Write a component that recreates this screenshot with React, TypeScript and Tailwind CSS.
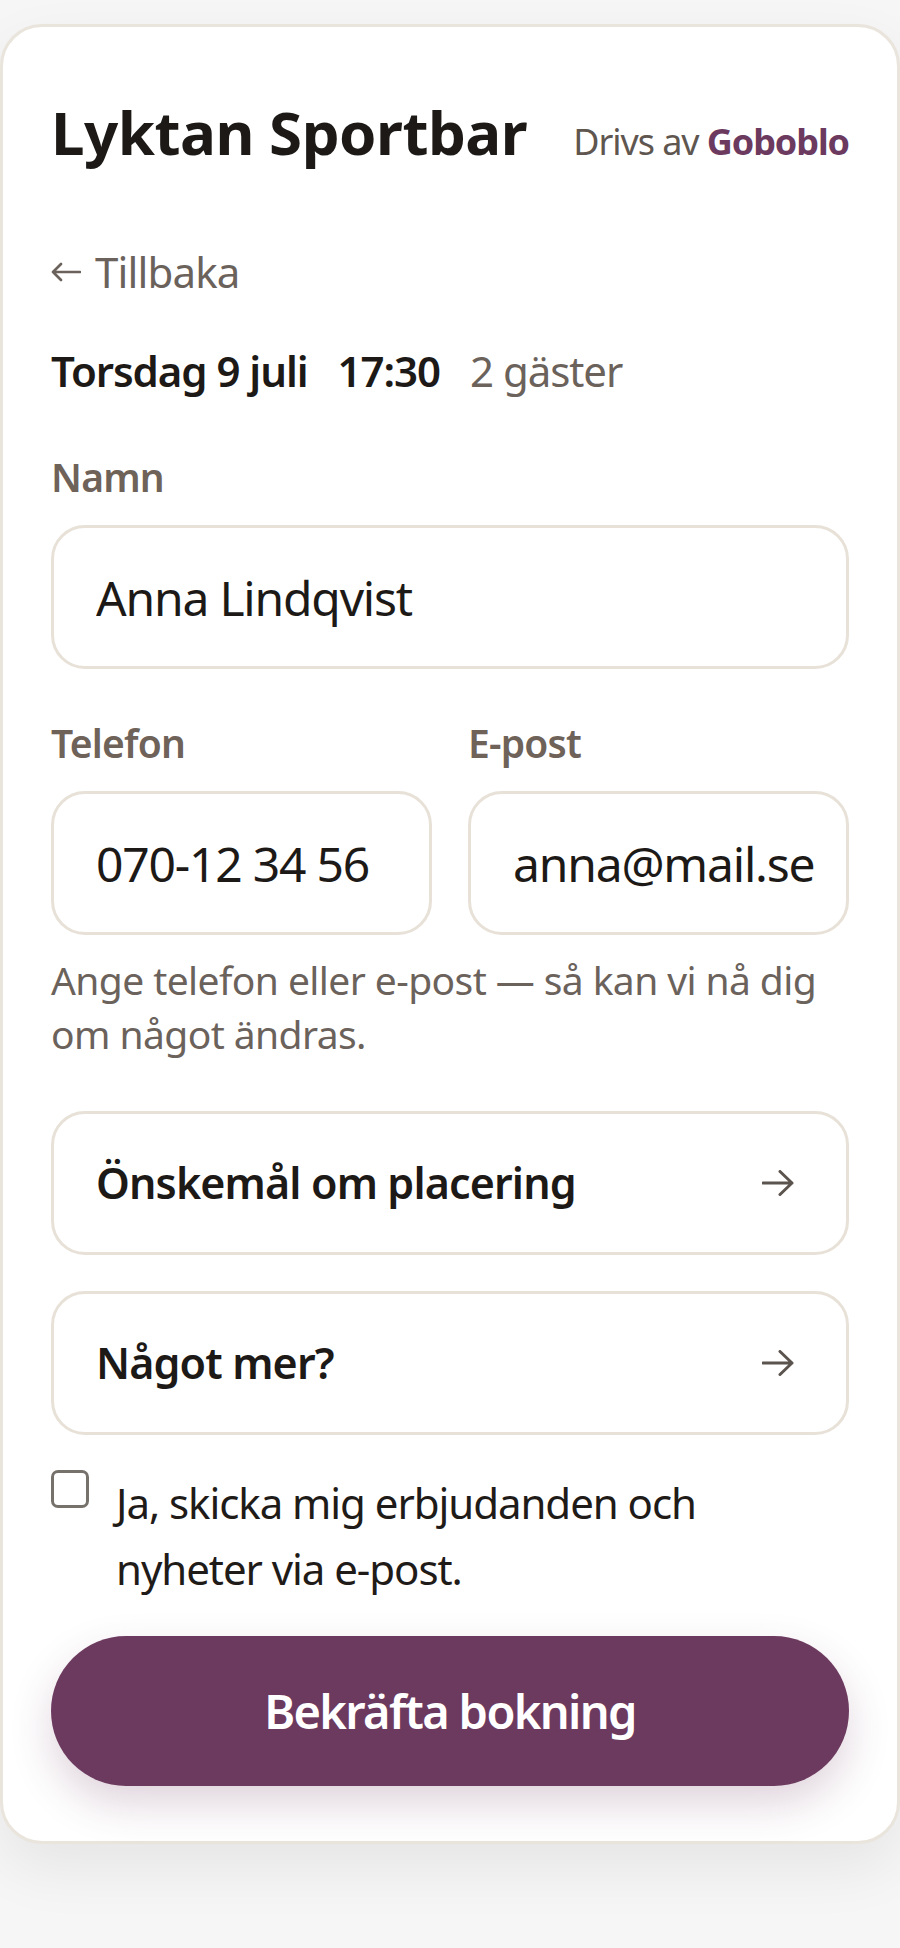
import { useState } from 'react'

function ArrowRight() {
  return (
    <svg width="32" height="26" viewBox="0 0 32 26" fill="none" aria-hidden>
      <path
        d="M1 13H30M18 1.5L30 13L18 24.5"
        stroke="#5b534d"
        strokeWidth="3"
        strokeLinecap="round"
        strokeLinejoin="round"
      />
    </svg>
  )
}

function ArrowLeft() {
  return (
    <svg width="30" height="20" viewBox="0 0 30 20" fill="none" aria-hidden>
      <path
        d="M29 10H2M10 2L2 10L10 18"
        stroke="#6b625b"
        strokeWidth="2.6"
        strokeLinecap="round"
        strokeLinejoin="round"
      />
    </svg>
  )
}

function Field({ value }: { value: string }) {
  return (
    <input
      readOnly
      defaultValue={value}
      className="block h-[144px] w-full min-w-0 rounded-[34px] border-[3px] border-[#e7e1d8] bg-white pl-[42px] pr-[24px] text-[48px] tracking-[-0.025em] text-[#1c1917] outline-none"
    />
  )
}

function OptionRow({ label }: { label: string }) {
  return (
    <button className="flex h-[144px] w-full items-center justify-between rounded-[34px] border-[3px] border-[#e7e1d8] bg-white pl-[42px] pr-[52px] text-left">
      <span className="text-[43px] font-semibold tracking-[-0.02em] text-[#1c1917]">{label}</span>
      <ArrowRight />
    </button>
  )
}

export default function App() {
  const [optIn, setOptIn] = useState(false)

  return (
    <div className="min-h-screen bg-[#f6f6f6] pt-[24px] pb-[100px] font-['Noto_Sans',sans-serif]">
      <div className="rounded-[42px] border-[3px] border-[#e9e4dc] bg-white px-[48px] pt-[68px] pb-[55px] shadow-[0_24px_60px_rgba(0,0,0,0.07)]">
        <header className="flex items-baseline justify-between">
          <h1 className="text-[60px] font-bold leading-[75px] tracking-[-0.5px] text-[#1c1917]">
            Lyktan Sportbar
          </h1>
          <p className="text-[36px] tracking-[-0.03em] text-[#5f5650]">
            Drivs av <span className="font-bold text-[#6b3a5e]">Goboblo</span>
          </p>
        </header>

        <a className="mt-[74px] flex items-center gap-[14px] text-[42px] leading-[56px] tracking-[-0.02em] text-[#6b625b]">
          <ArrowLeft />
          <span>Tillbaka</span>
        </a>

        <div className="mt-[43px] flex gap-[30px] text-[42px] leading-[56px] tracking-[-0.025em]">
          <span className="font-semibold text-[#1c1917]">Torsdag 9 juli</span>
          <span className="font-semibold text-[#1c1917]">17:30</span>
          <span className="text-[#6b625b]">2 gäster</span>
        </div>

        <label className="mt-[52px] block text-[39px] font-semibold leading-[52px] tracking-[-0.02em] text-[#6e6259]">
          Namn
        </label>
        <div className="mt-[22px]">
          <Field value="Anna Lindqvist" />
        </div>

        <div className="mt-[48px] grid grid-cols-2 gap-x-[36px]">
          <div>
            <label className="block text-[39px] font-semibold leading-[52px] tracking-[-0.02em] text-[#6e6259]">
              Telefon
            </label>
            <div className="mt-[22px]">
              <Field value="070-12 34 56" />
            </div>
          </div>
          <div>
            <label className="block text-[39px] font-semibold leading-[52px] tracking-[-0.02em] text-[#6e6259]">
              E-post
            </label>
            <div className="mt-[22px]">
              <Field value="anna@mail.se" />
            </div>
          </div>
        </div>

        <p className="mt-[18px] text-[39px] leading-[54px] tracking-[-0.015em] text-[#6b625c]">
          Ange telefon eller e-post — så kan vi nå dig om något ändras.
        </p>

        <div className="mt-[50px] flex flex-col gap-[36px]">
          <OptionRow label="Önskemål om placering" />
          <OptionRow label="Något mer?" />
        </div>

        <label className="mt-[35px] flex items-start gap-[27px]">
          <button
            onClick={() => setOptIn(!optIn)}
            className="h-[38px] w-[38px] shrink-0 rounded-[7px] border-[3px] border-[#77716c] bg-white"
            aria-pressed={optIn}
          />
          <span className="text-[42px] leading-[66px] tracking-[-0.025em] text-[#1f1b18]">
            Ja, skicka mig erbjudanden och nyheter via e-post.
          </span>
        </label>

        <button className="mt-[34px] h-[150px] w-full rounded-full bg-[#6d3a5f] text-[47px] font-semibold tracking-[-0.035em] text-white shadow-[0_18px_40px_rgba(109,58,95,0.22)]">
          Bekräfta bokning
        </button>
      </div>
    </div>
  )
}
